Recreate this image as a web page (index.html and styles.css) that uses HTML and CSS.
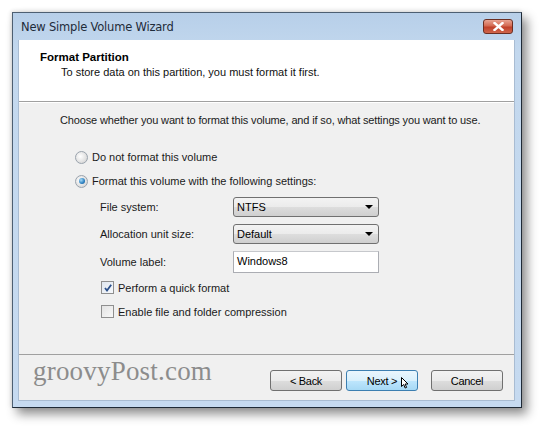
FILE: index.html
```html
<!DOCTYPE html>
<html>
<head>
<meta charset="utf-8">
<link rel="stylesheet" href="styles.css">
</head>
<body>
<div class="stage">
  <div class="window">
    <div class="titlebar">
      <span class="title">New Simple Volume Wizard</span>
      <span class="close">
        <svg width="11" height="9" viewBox="0 0 11 9"><path d="M1.5 1 L9.5 8 M9.5 1 L1.5 8" stroke="#fff" stroke-width="2.4" stroke-linecap="square"/></svg>
      </span>
    </div>
    <div class="client">
      <div class="header">
        <div class="h-title">Format Partition</div>
        <div class="h-sub">To store data on this partition, you must format it first.</div>
      </div>
      <div class="body">
        <div class="intro">Choose whether you want to format this volume, and if so, what settings you want to use.</div>
        <div class="opt"><span class="radio"></span><span>Do not format this volume</span></div>
        <div class="opt"><span class="radio on"></span><span>Format this volume with the following settings:</span></div>
        <div class="grid">
          <span class="lbl">File system:</span>
          <div class="combo"><span>NTFS</span><span class="arrow"></span></div>
          <span class="lbl">Allocation unit size:</span>
          <div class="combo"><span>Default</span><span class="arrow"></span></div>
          <span class="lbl">Volume label:</span>
          <div class="textbox">Windows8</div>
        </div>
        <div class="chk-row"><span class="chk on"><svg width="10" height="10" viewBox="0 0 10 10"><path d="M2 5 L4 7.5 L8.2 1.8" fill="none" stroke="#2a4f8a" stroke-width="1.8"/></svg></span><span>Perform a quick format</span></div>
        <div class="chk-row"><span class="chk"></span><span>Enable file and folder compression</span></div>
      </div>
      <div class="footer">
        <span class="brand">groovyPost.com</span>
        <div class="buttons">
          <span class="btn">&lt; Back</span>
          <span class="btn primary">Next &gt;<svg class="cursor" width="8" height="12" viewBox="0 0 8 12"><path d="M0.5 0.5 L0.5 9.5 L2.7 7.5 L4.2 11 L5.6 10.4 L4.1 7 L7 7 Z" fill="#fff" stroke="#000" stroke-width="1"/></svg></span>
          <span class="btn cancel">Cancel</span>
        </div>
      </div>
    </div>
  </div>
</div>
</body>
</html>
```
FILE: styles.css
```css
* { box-sizing: border-box; }
html, body { margin: 0; padding: 0; background: #ffffff; }
body {
  width: 542px; height: 428px; overflow: hidden;
  font-family: "Liberation Sans", Arial, sans-serif;
  font-size: 11px; color: #1a1a1a;
}
.stage { padding: 12px 0 0 12px; }
.window {
  width: 510px; height: 396px;
  border: 1px solid #4d5f72;
  border-right-color: #1f2a36; border-bottom-color: #1f2a36;
  background: linear-gradient(#b7cfe9, #c3d8ee 40px, #c6daf0);
  box-shadow: 5px 6px 10px rgba(0,0,0,0.45), -1px -1px 4px rgba(0,0,0,0.12);
  display: flex; flex-direction: column;
  padding: 0 6px 6px 5px;
}
.titlebar {
  height: 27px; display: flex; align-items: center; justify-content: space-between;
  padding: 0 2px 0 3px;
}
.title { font-family: "DejaVu Sans", sans-serif; font-size: 11.5px; color: #1e2b3a; letter-spacing: -0.2px; margin-top: 1px; }
.close {
  width: 30px; height: 15px; margin-top: -1px;
  border: 1px solid #6b2e22; border-radius: 3px;
  background: linear-gradient(#e8a493, #d46a52 45%, #c0412a 55%, #d0664c);
  display: flex; align-items: center; justify-content: center;
}
.client { flex: 1; display: flex; flex-direction: column; background: #f0f0f0; border: 1px solid #a9bcd2; border-top: none; }
.header {
  height: 62px; background: #fff;
  border-bottom: 1px solid #a0a0a0;
  padding: 11px 0 0 21px;
}
.h-title { font-weight: bold; font-size: 11.5px; color: #000; }
.h-sub { padding-left: 21px; margin-top: 3px; font-size: 11px; color: #111; }
.body { flex: 1; padding: 11px 0 0 41px; border-top: 1px solid #fff; }
.intro { font-size: 11px; letter-spacing: -0.15px; }
.opt { display: flex; align-items: center; gap: 4px; margin-left: 15px; height: 14px; }
.opt:nth-of-type(2) { margin-top: 24px; }
.opt:nth-of-type(3) { margin-top: 10px; }
.radio {
  width: 13px; height: 13px; border-radius: 50%;
  border: 1px solid #9aa3ad;
  background: radial-gradient(circle at 40% 40%, #ffffff, #dcdcdc 70%, #c8c8c8);
  display: inline-flex; align-items: center; justify-content: center;
}
.radio.on::after {
  content: ""; width: 6px; height: 6px; border-radius: 50%;
  background: radial-gradient(circle at 35% 35%, #a8dcf8, #2a7fc0 60%, #184f86);
}
.grid {
  display: grid; grid-template-columns: 133px 146px;
  row-gap: 7px; align-items: center;
  margin: 9px 0 0 40px;
}
.lbl { font-size: 11px; }
.combo {
  height: 20px; border: 1px solid #707070; border-radius: 3px;
  background: linear-gradient(#f3f3f3, #ebebeb 50%, #dddddd 51%, #cfcfcf);
  display: flex; align-items: center; justify-content: space-between;
  padding: 0 5px 0 3px; font-size: 11px; color: #000;
}
.arrow { width: 0; height: 0; border-left: 4px solid transparent; border-right: 4px solid transparent; border-top: 4px solid #000; }
.textbox {
  height: 22px; border: 1px solid #abadb3; border-top-color: #c6c8cc;
  background: #fff; padding: 3px 0 0 3px; font-size: 11px; color: #000;
}
.chk-row { display: flex; align-items: center; gap: 4px; margin-left: 41px; height: 13px; margin-top: 8px; }
.chk-row + .chk-row { margin-top: 11px; }
.chk {
  width: 13px; height: 13px; border: 1px solid #8f8f8f;
  background: linear-gradient(135deg, #e3e3e3, #f8f8f8);
  display: inline-flex; align-items: center; justify-content: center;
}
.chk.on { background: linear-gradient(135deg, #dfe6ef, #f7f9fc); }
.footer {
  height: 46px; border-top: 1px solid #a0a0a0;
  display: flex; align-items: flex-start; justify-content: space-between;
  padding: 0 11px 0 14px;
}
.brand {
  font-family: "Liberation Serif", "Times New Roman", serif;
  font-size: 27px; color: #8c8c8c; margin-top: 1px; letter-spacing: 0.2px;
}
.buttons { display: flex; gap: 4px; margin-top: 15px; }
.btn {
  width: 72px; height: 21px; border: 1px solid #707070; border-radius: 3px;
  background: linear-gradient(#f2f2f2, #ebebeb 50%, #dddddd 51%, #cfcfcf);
  display: inline-flex; align-items: center; justify-content: center;
  font-size: 11px; color: #000; letter-spacing: -0.3px; position: relative;
}
.btn.primary {
  border-color: #3c7fb1;
  background: linear-gradient(#eaf6fd, #d9f0fc 50%, #bee6fd 51%, #a7d9f5);
}
.cursor { position: absolute; left: 54px; top: 6px; }
.btn.cancel { margin-left: 9px; }
```
